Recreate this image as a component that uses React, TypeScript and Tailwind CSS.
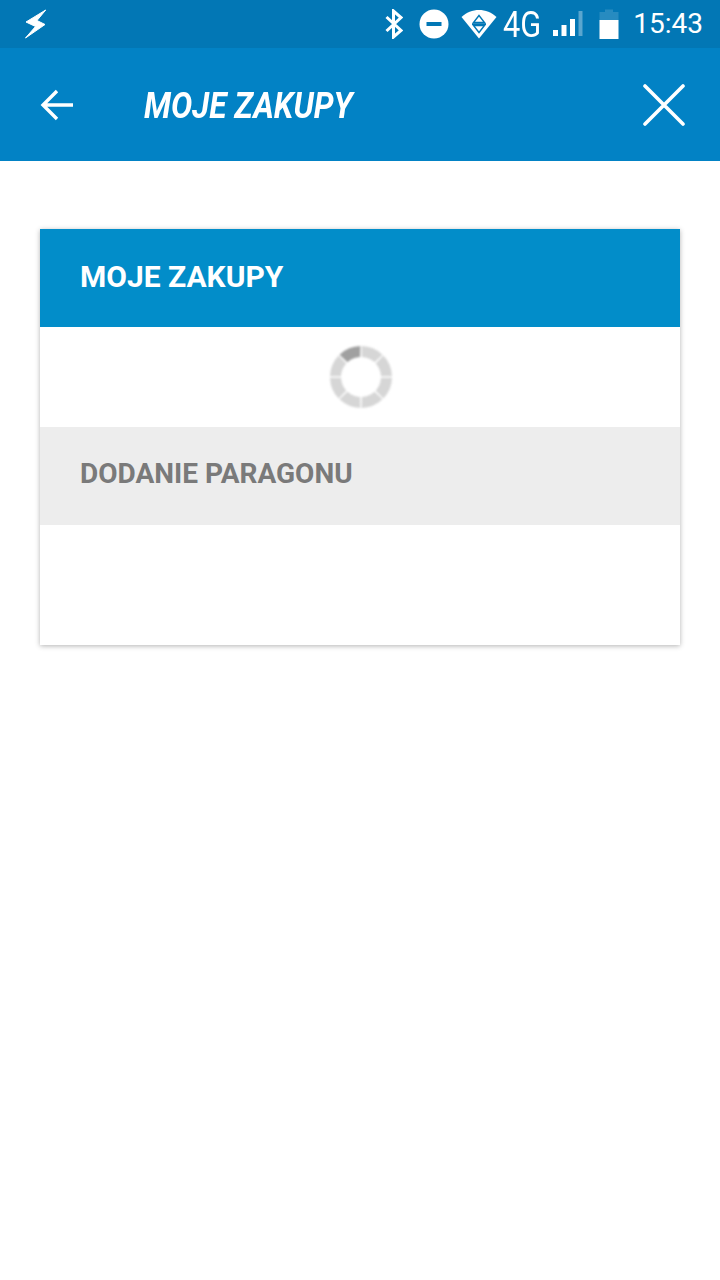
const FONT = "font-['Roboto','Liberation_Sans',sans-serif]";

const SPINNER_ANGLES = [-90, -45, 0, 45, 90, 135, 180, 225];

function polar(r: number, deg: number) {
  const a = (deg * Math.PI) / 180;
  return `${(32 + r * Math.cos(a)).toFixed(2)} ${(32 + r * Math.sin(a)).toFixed(2)}`;
}

function Spinner() {
  const gap = 1.2;
  return (
    <svg width="64" height="64" viewBox="0 0 64 64" className="ml-[2px] blur-[0.8px]">
      {SPINNER_ANGLES.map((start, i) => {
        const outerA = start + gap;
        const outerB = start + 45 - gap;
        const innerA = start + gap * 2;
        const innerB = start + 45 - gap * 2;
        return (
          <path
            key={start}
            d={`M${polar(31, outerA)} A31 31 0 0 1 ${polar(31, outerB)} L${polar(20, innerB)} A20 20 0 0 0 ${polar(20, innerA)} Z`}
            fill={i === 7 ? '#a0a0a0' : '#d6d6d6'}
          />
        );
      })}
    </svg>
  );
}

function BoltIcon() {
  return (
    <svg width="24" height="30" viewBox="0 0 24 30" fill="white" stroke="white" strokeWidth="1" strokeLinejoin="round">
      <path d="M21.7 1 L2 13 L11.5 17.5 L1.5 29 L21 15.5 L13 11.5 Z" />
    </svg>
  );
}

function BluetoothIcon() {
  return (
    <svg width="18" height="30" viewBox="0 0 18 30" fill="none" stroke="white" strokeWidth="3">
      <path d="M1.5 8 L16 21.5 L8.5 28 V2 L16 8.5 L1.5 22" />
    </svg>
  );
}

function DndIcon() {
  return (
    <svg width="30" height="30" viewBox="0 0 30 30">
      <circle cx="15" cy="15" r="14.5" fill="white" />
      <rect x="7.5" y="13" width="15" height="4" fill="#0277b5" />
    </svg>
  );
}

function WifiIcon() {
  return (
    <svg width="36" height="30" viewBox="0 0 36 30">
      <path d="M0.5 8 C10 -1.5 26 -1.5 35.5 8 L18 29.5 Z" fill="white" />
      <path d="M18 6.5 L23.5 13.5 H12.5 Z M12.5 16.5 H23.5 L18 23.5 Z" fill="none" stroke="#0277b5" strokeWidth="1.4" />
      <rect x="11" y="14.2" width="14" height="1.8" fill="#0277b5" />
    </svg>
  );
}

function SignalIcon() {
  return (
    <svg width="30" height="26" viewBox="0 0 30 26" fill="white">
      <rect x="0" y="19" width="5" height="6" />
      <rect x="8.5" y="14" width="5" height="11" />
      <rect x="17" y="8" width="5" height="17" />
      <rect x="25.5" y="0" width="4" height="25" fillOpacity="0.35" />
    </svg>
  );
}

function BatteryIcon() {
  return (
    <svg width="20" height="30" viewBox="0 0 20 30" fill="white">
      <path d="M0.5 3 H6 V0.5 H14 V3 H19.5 V11 H0.5 Z" fillOpacity="0.15" />
      <rect x="0.5" y="11" width="19" height="19" />
    </svg>
  );
}

function StatusBar() {
  return (
    <div className="flex h-12 items-center bg-[#0277b5] pl-[24px] pr-[17px] text-white">
      <BoltIcon />
      <div className="ml-auto flex items-center">
        <BluetoothIcon />
        <div className="ml-[16px]"><DndIcon /></div>
        <div className="ml-[12px]"><WifiIcon /></div>
        <span className="ml-[6px] w-[39px] origin-left scale-x-[0.83] text-[37px] leading-none font-normal">4G</span>
        <div className="ml-[11px]"><SignalIcon /></div>
        <div className="ml-[16px]"><BatteryIcon /></div>
        <span className="ml-[14px] text-[28px] leading-none">15:43</span>
      </div>
    </div>
  );
}

function AppBar() {
  return (
    <div className="flex h-[113px] items-center bg-[#0282c5] text-white">
      <svg width="34" height="32" viewBox="0 0 34 32" fill="none" stroke="white" strokeWidth="3.4" className="ml-[40px]">
        <path d="M33 16 H3 M17 2 L3 16 L17 30" />
      </svg>
      <span className="ml-[70px] origin-left scale-x-[0.88] pt-[2px] text-[36px] leading-none font-bold italic whitespace-nowrap">
        MOJE ZAKUPY
      </span>
      <svg width="42" height="42" viewBox="0 0 42 42" fill="none" stroke="white" strokeWidth="3.6" strokeLinecap="round" className="mr-[35px] ml-auto">
        <path d="M2 2 L40 40 M40 2 L2 40" />
      </svg>
    </div>
  );
}

export default function App() {
  return (
    <div className={`${FONT} flex min-h-[1280px] w-[720px] flex-col bg-white`}>
      <StatusBar />
      <AppBar />
      <div className="px-10 pt-[68px]">
        <div className="flex flex-col bg-white shadow-[0_1px_5px_rgba(0,0,0,0.3)]">
          <div className="flex h-[98px] items-center bg-[#028dc9] px-10 pb-[3px] text-[30px] font-bold text-white">
            MOJE ZAKUPY
          </div>
          <div className="flex h-[100px] items-center justify-center">
            <Spinner />
          </div>
          <div className="flex h-[98px] items-center bg-[#ededed] px-10 pb-[4px] text-[28px] font-bold text-[#7a7a7a]">
            DODANIE PARAGONU
          </div>
          <div className="h-[120px]" />
        </div>
      </div>
    </div>
  );
}
